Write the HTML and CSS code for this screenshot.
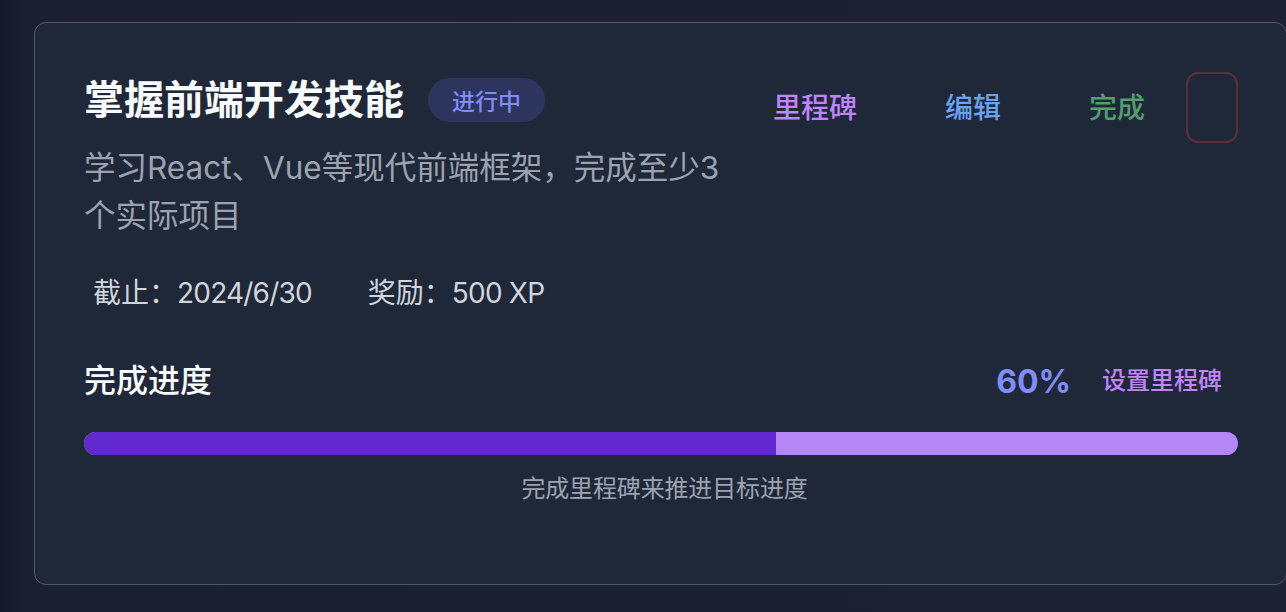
FILE: index.html
```html
<!DOCTYPE html>
<html lang="zh-CN">
<head>
<meta charset="utf-8">
<title>目标</title>
<link rel="stylesheet" href="styles.css">
</head>
<body>
<div class="card">
  <div class="header">
    <div class="info">
      <div class="title-row">
        <h2 class="title">掌握前端开发技能</h2>
        <span class="badge">进行中</span>
      </div>
      <p class="desc">学习React、Vue等现代前端框架，完成至少3个实际项目</p>
      <div class="meta">
        <span class="meta-item">截止：<span class="meta-val">2024/6/30</span></span>
        <span class="meta-item">奖励：<span class="meta-val">500 XP</span></span>
      </div>
    </div>
    <div class="actions">
      <div class="text-actions">
        <button class="act act-milestone">里程碑</button>
        <button class="act act-edit">编辑</button>
        <button class="act act-done">完成</button>
      </div>
      <button class="icon-btn" aria-label="删除"></button>
    </div>
  </div>
  <div class="progress">
    <div class="progress-head">
      <span class="progress-label">完成进度</span>
      <div class="progress-right">
        <span class="percent">60%</span>
        <button class="set-ms">设置里程碑</button>
      </div>
    </div>
    <div class="track"><div class="fill" style="width:60%"></div></div>
    <p class="hint">完成里程碑来推进目标进度</p>
  </div>
</div>
</body>
</html>
```

FILE: styles.css
```css
* { box-sizing: border-box; }

html, body {
  margin: 0;
  padding: 0;
}

body {
  width: 1286px;
  height: 612px;
  overflow: hidden;
  background: linear-gradient(90deg, #151a2b 0px, #1a1f31 24px, #1c2134 100%);
  font-family: "Inter", "Noto Sans CJK SC", sans-serif;
  color: #f3f4f6;
}

.card {
  margin: 22px 0 0 34px;
  width: 1253px;
  background: #1f2839;
  border: 1px solid #4f5969;
  border-radius: 12px;
  padding: 49px 48px 77px 49px;
}

.header {
  display: flex;
  justify-content: space-between;
  align-items: flex-start;
}

.info {
  display: flex;
  flex-direction: column;
}

.title-row {
  display: flex;
  align-items: center;
  gap: 24px;
  height: 56px;
}

.title {
  margin: 0;
  font-size: 40px;
  line-height: 56px;
  font-weight: 700;
  color: #f9fafb;
}

.badge {
  display: inline-flex;
  align-items: center;
  height: 44px;
  padding: 0 24px;
  border-radius: 22px;
  background: #2d355f;
  color: #818cf8;
  font-size: 23px;
  font-weight: 500;
}

.desc {
  margin: 16px 0 0;
  max-width: 660px;
  font-size: 31.5px;
  line-height: 48px;
  color: #9ca3af;
}

.meta {
  margin-top: 33px;
  padding-left: 9px;
  display: flex;
  gap: 56px;
  font-size: 28px;
  line-height: 40px;
  color: #d1d5db;
}

.meta-val {
  letter-spacing: -0.8px;
}

.actions {
  display: flex;
  align-items: center;
}

.text-actions {
  display: flex;
  align-items: center;
  gap: 88px;
}

.act {
  background: none;
  border: none;
  padding: 0;
  font-family: inherit;
  font-size: 28px;
  line-height: 40px;
  font-weight: 500;
  cursor: pointer;
}

.act-milestone { color: #c084fc; }
.act-edit { color: #6aa2f2; }
.act-done { color: #52a06b; }

.icon-btn {
  margin-left: 41px;
  width: 52px;
  height: 71px;
  background: transparent;
  border: 2px solid #5b2f3a;
  border-radius: 12px;
  padding: 0;
}

.progress {
  margin-top: 44px;
}

.progress-head {
  display: flex;
  justify-content: space-between;
  align-items: center;
  height: 48px;
}

.progress-label {
  font-size: 32px;
  line-height: 48px;
  font-weight: 500;
  color: #f9fafb;
}

.progress-right {
  display: flex;
  align-items: center;
  gap: 15px;
}

.percent {
  font-size: 32px;
  font-weight: 700;
  color: #818cf8;
}

.set-ms {
  background: none;
  border: none;
  padding: 4px 16px;
  font-family: inherit;
  font-size: 24px;
  line-height: 36px;
  font-weight: 500;
  color: #c084fc;
}

.track {
  margin-top: 27px;
  height: 23px;
  border-radius: 12px;
  background: #b586f5;
  overflow: hidden;
}

.fill {
  height: 100%;
  background: #6229d0;
}

.hint {
  margin: 16px 0 0;
  padding-left: 7px;
  text-align: center;
  font-size: 24px;
  line-height: 36px;
  letter-spacing: -0.15px;
  color: #9ca3af;
}
```
